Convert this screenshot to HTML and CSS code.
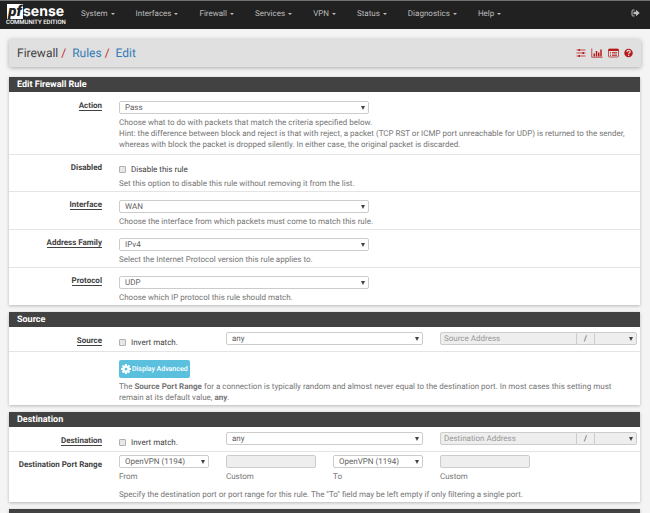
FILE: index.html
```
<!DOCTYPE html>
<html lang="en">
<head>
	<meta charset="utf-8">
	<title>Firewall: Rules: Edit</title>
	<link rel="stylesheet" href="styles.css">
</head>
<body>

<nav class="navbar">
	<a class="brand" href="#">
		<span class="brand-name"><span class="brand-pf">pf</span><span class="brand-sense">sense</span></span>
		<span class="brand-edition">COMMUNITY EDITION</span>
	</a>
	<div class="menu">
		<a href="#">System</a>
		<a href="#">Interfaces</a>
		<a href="#">Firewall</a>
		<a href="#">Services</a>
		<a href="#">VPN</a>
		<a href="#">Status</a>
		<a href="#">Diagnostics</a>
		<a href="#">Help</a>
	</div>
	<a class="logout" href="#" aria-label="Logout">
		<svg width="9" height="8" viewBox="0 0 18 16"><path d="M7 2H4a2 2 0 0 0-2 2v8a2 2 0 0 0 2 2h3" fill="none" stroke="currentColor" stroke-width="2"/><path d="M10 1.500l7.500 6.500-7.500 6.500v-4H5v-5h5z" fill="currentColor"/></svg>
	</a>
</nav>

<header class="page-header">
	<h1 class="crumbs">Firewall <i>/</i> <a href="#">Rules</a> <i>/</i> <a href="#">Edit</a></h1>
	<div class="tools">
		<a href="#" aria-label="Settings"><svg width="10" height="10" viewBox="0 0 20 20"><path d="M1 4h18M1 10h18M1 16h18" stroke="currentColor" stroke-width="1.500"/><path d="M5 2h3v4H5zM13 8h3v4h-3zM5 14h3v4H5z" fill="currentColor"/></svg></a>
		<a href="#" aria-label="Status"><svg width="12" height="10" viewBox="0 0 24 20"><path d="M1.500 1v17.500H23" fill="none" stroke="currentColor" stroke-width="1.500"/><path d="M5 11h3v6H5zM9.500 6h3v11h-3zM14 9h3v8h-3zM18.500 3h3v14h-3z" fill="currentColor"/></svg></a>
		<a href="#" aria-label="Logs"><svg width="11" height="10" viewBox="0 0 22 20"><rect x="1" y="2" width="20" height="16" rx="2" fill="none" stroke="currentColor" stroke-width="1.500"/><path d="M1 2h20v4H1z" fill="currentColor"/><path d="M4 9h2M8 9h10M4 12h2M8 12h10M4 15h2M8 15h10" stroke="currentColor" stroke-width="1.500"/></svg></a>
		<a href="#" aria-label="Help"><svg width="9" height="10" viewBox="0 0 18 20"><circle cx="9" cy="10" r="8.500" fill="currentColor"/><path d="M6 8c0-4 6.500-4 6.500-.500 0 2.300-3.200 2-3.200 4.500M9.200 13.500v2.500" fill="none" stroke="#e0e0e0" stroke-width="2.400"/></svg></a>
	</div>
</header>

<form>
	<section class="panel">
		<h2>Edit Firewall Rule</h2>
		<div class="row">
			<label class="name" for="action"><u>Action</u></label>
			<div class="field wide">
				<span class="select medium"><select id="action"><option>Pass</option></select></span>
				<p class="help">Choose what to do with packets that match the criteria specified below.<br>
				Hint: the difference between block and reject is that with reject, a packet (TCP RST or ICMP port unreachable for UDP) is returned to the sender, whereas with block the packet is dropped silently. In either case, the original packet is discarded.</p>
			</div>
		</div>
		<div class="row">
			<span class="name">Disabled</span>
			<div class="field wide">
				<label class="check"><input type="checkbox"> Disable this rule</label>
				<p class="help">Set this option to disable this rule without removing it from the list.</p>
			</div>
		</div>
		<div class="row">
			<label class="name" for="interface"><u>Interface</u></label>
			<div class="field wide">
				<span class="select medium"><select id="interface"><option>WAN</option></select></span>
				<p class="help">Choose the interface from which packets must come to match this rule.</p>
			</div>
		</div>
		<div class="row">
			<label class="name" for="family"><u>Address Family</u></label>
			<div class="field wide">
				<span class="select medium"><select id="family"><option>IPv4</option></select></span>
				<p class="help">Select the Internet Protocol version this rule applies to.</p>
			</div>
		</div>
		<div class="row">
			<label class="name" for="protocol"><u>Protocol</u></label>
			<div class="field wide">
				<span class="select medium"><select id="protocol"><option>UDP</option></select></span>
				<p class="help">Choose which IP protocol this rule should match.</p>
			</div>
		</div>
	</section>

	<section class="panel">
		<h2>Source</h2>
		<div class="row address">
			<span class="name"><u>Source</u></span>
			<label class="check"><input type="checkbox"> Invert match.</label>
			<span class="select double"><select aria-label="Source type"><option>any</option></select></span>
			<div class="group double">
				<input class="text" type="text" placeholder="Source Address" aria-label="Source Address" disabled>
				<span class="addon">/</span>
				<span class="select"><select aria-label="Source mask" disabled><option></option></select></span>
			</div>
		</div>
		<div class="row">
			<div class="field wide">
				<button class="btn" type="button">
					<svg width="10" height="10" viewBox="0 0 20 20"><circle cx="10" cy="10" r="5" fill="none" stroke="currentColor" stroke-width="4.500"/><path d="M10 0v4M10 16v4M0 10h4M16 10h4M3 3l3 3M14 14l3 3M3 17l3-3M14 6l3-3" stroke="currentColor" stroke-width="4"/></svg>
					Display Advanced
				</button>
				<p class="help">The <b>Source Port Range</b> for a connection is typically random and almost never equal to the destination port. In most cases this setting must remain at its default value, <b>any</b>.</p>
			</div>
		</div>
	</section>

	<section class="panel">
		<h2>Destination</h2>
		<div class="row address">
			<span class="name"><u>Destination</u></span>
			<label class="check"><input type="checkbox"> Invert match.</label>
			<span class="select double"><select aria-label="Destination type"><option>any</option></select></span>
			<div class="group double">
				<input class="text" type="text" placeholder="Destination Address" aria-label="Destination Address" disabled>
				<span class="addon">/</span>
				<span class="select"><select aria-label="Destination mask" disabled><option></option></select></span>
			</div>
		</div>
		<div class="row ports">
			<span class="name">Destination Port Range</span>
			<div class="field">
				<span class="select"><select id="from"><option>OpenVPN (1194)</option></select></span>
				<label class="help" for="from">From</label>
			</div>
			<div class="field">
				<input class="text" id="from-custom" type="text" disabled>
				<label class="help" for="from-custom">Custom</label>
			</div>
			<div class="field">
				<span class="select"><select id="to"><option>OpenVPN (1194)</option></select></span>
				<label class="help" for="to">To</label>
			</div>
			<div class="field">
				<input class="text" id="to-custom" type="text" disabled>
				<label class="help" for="to-custom">Custom</label>
			</div>
			<p class="help note">Specify the destination port or port range for this rule. The "To" field may be left empty if only filtering a single port.</p>
		</div>
	</section>

	<section class="panel">
		<div class="bar"></div>
	</section>
</form>

</body>
</html>
```

FILE: styles.css
```
* {
	box-sizing: border-box;
}

html {
	height: 100%;
	overflow: hidden;
}

body {
	margin: 0;
	background-color: #f4f4f4;
	font-family: Roboto, "Liberation Sans", sans-serif;
	font-size: 8px;
	line-height: 11px;
	color: #424242;
	text-rendering: geometricPrecision;
}

a {
	color: #337ab7;
	text-decoration: none;
}

svg {
	display: block;
}

/* top bar */
.navbar {
	display: flex;
	align-items: flex-start;
	height: 29px;
	padding: 0 10px 0 6px;
	background-color: #212121;
	border-top: 1px solid #6f7270;
}

.brand {
	width: 75px;
	padding-top: 3px;
	color: white;
}

.brand-name {
	display: flex;
	height: 15px;
	padding-left: 1px;
}

.brand-pf {
	width: 16px;
	background-color: white;
	color: #212121;
	font: italic 900 15px/14px Roboto, sans-serif;
	text-align: center;
}

.brand-sense {
	font: 700 14px/16px Inter, sans-serif;
}

.brand-edition {
	display: block;
	font-size: 6px;
	line-height: 7px;
	font-weight: 500;
	white-space: nowrap;
}

.menu {
	display: flex;
	gap: 21px;
	flex: 1;
	padding-top: 7px;
}

.menu a {
	display: flex;
	align-items: center;
	gap: 3px;
	color: #bdbdbd;
}

.menu a::after {
	content: "";
	border: 2px solid transparent;
	border-top-color: #bdbdbd;
	border-bottom: 0;
}

.logout {
	padding-top: 8px;
	color: #bdbdbd;
}

/* breadcrumb */
.page-header {
	display: flex;
	align-items: center;
	justify-content: space-between;
	height: 28px;
	margin: 10px 9px;
	padding: 0 8px;
	background-color: #e0e0e0;
	border-radius: 2px;
	box-shadow: 0 1px 4px rgba(0, 0, 0, 0.3);
}

.crumbs {
	margin: 0;
	font-size: 12px;
	line-height: 16px;
	font-weight: 400;
}

.crumbs i {
	margin-right: 3px;
	color: #c62828;
	font-style: normal;
}

.tools {
	display: flex;
	gap: 5px;
}

.tools a {
	color: #b71c1c;
}

/* panels */
.panel {
	margin: 0 10px 7px 9px;
	background-color: white;
	box-shadow: 0 1px 3px rgba(0, 0, 0, 0.25);
}

.panel h2,
.bar {
	height: 15px;
	margin: 0;
	padding: 1px 8px 0;
	background-color: #424242;
	color: white;
	font-size: 9px;
	line-height: 15px;
	font-weight: 700;
}

.row {
	display: grid;
	grid-template-columns: repeat(6, 1fr);
	column-gap: 17px;
	padding: 9px 3px 4px;
}

.row + .row {
	padding: 8px 3px 2px;
	border-top: 1px solid #e4e4e4;
}

.name {
	margin-top: -1px;
	font-weight: 700;
	text-align: right;
	white-space: nowrap;
}

.name u {
	text-decoration: none;
	border-bottom: 1px solid #424242;
}

.wide {
	grid-column: 2 / -1;
}

.double {
	grid-column: span 2;
}

.help {
	display: block;
	margin: 3px 0 0;
	color: #757575;
}

/* form controls */
.select {
	display: block;
	position: relative;
}

.select::after {
	content: "";
	position: absolute;
	top: 5px;
	right: 4px;
	border: 2px solid transparent;
	border-top: 4px solid #424242;
	border-bottom: 0;
	pointer-events: none;
}

.medium {
	max-width: 250px;
}

select,
.text {
	display: block;
	appearance: none;
	width: 100%;
	height: 13px;
	margin: 0;
	padding: 0 5px;
	background-color: white;
	border: 1px solid #ccc;
	border-radius: 2px;
	font: inherit;
	line-height: 11px;
	color: #616161;
	text-rendering: inherit;
}

select:disabled,
.text:disabled {
	background-color: #eee;
	opacity: 1;
}

.text {
	padding: 0 3px;
}

.text::placeholder {
	color: #999;
}

.check {
	display: flex;
	align-items: center;
	gap: 5px;
	height: 12px;
	white-space: nowrap;
}

.check input {
	appearance: none;
	width: 7px;
	height: 7px;
	margin: 0;
	background-color: #e8e8e8;
	border: 1px solid #b0b0b0;
	border-radius: 1px;
}

.group {
	display: flex;
}

.group .text {
	flex: 1;
	min-width: 0;
	border-radius: 2px 0 0 2px;
}

.group .addon {
	width: 17px;
	height: 13px;
	background-color: #eee;
	border: 1px solid #ccc;
	border-width: 1px 0;
	text-align: center;
}

.group .select {
	width: 43px;
}

.group select {
	border-radius: 0 2px 2px 0;
}

.row.address {
	padding: 5px 3px 3px;
}

.address .name,
.address .check {
	margin-top: 4px;
}

.address .name {
	margin-top: 3px;
}

.btn {
	display: flex;
	align-items: center;
	gap: 1px;
	height: 18px;
	padding: 0 2px;
	background-color: #5bc0de;
	border: 0;
	border-radius: 2px;
	font: 500 7px/11px Roboto, sans-serif;
	color: white;
	text-rendering: inherit;
}

.row.ports {
	padding-top: 3px;
}

.ports .name {
	padding-top: 5px;
}

.note {
	grid-column: 2 / -1;
	margin-top: 7px;
}
```
